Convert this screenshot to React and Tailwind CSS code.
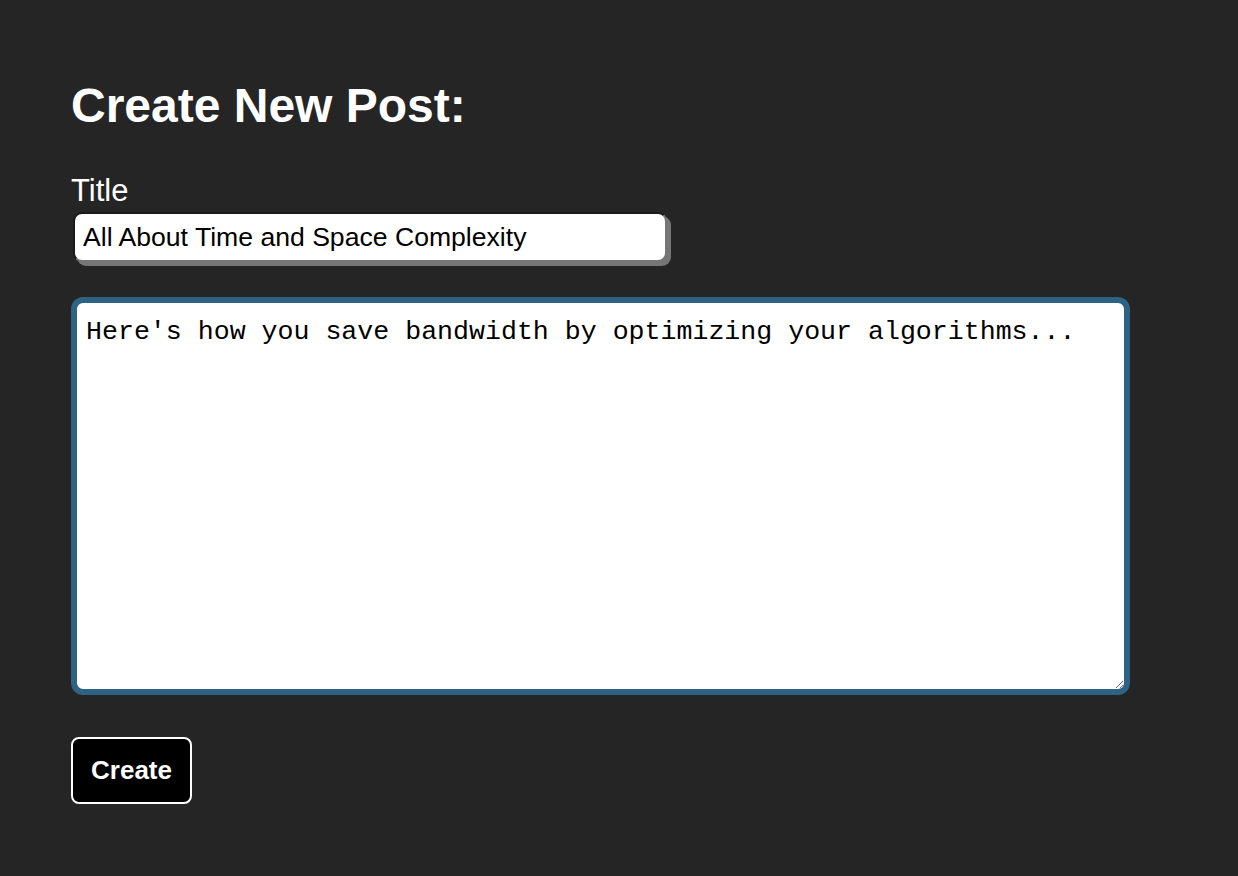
import { useState } from "react";

function App() {
  const [title, setTitle] = useState("All About Time and Space Complexity");
  const [body, setBody] = useState(
    "Here's how you save bandwidth by optimizing your algorithms..."
  );

  return (
    <div className="min-h-screen bg-[#252525] pl-[71px] pt-[78px] font-['Liberation_Sans',Arial,sans-serif] text-white">
      <h1 className="text-[48px] font-bold leading-[56px]">Create New Post:</h1>

      <form className="mt-[40px]" onSubmit={(e) => e.preventDefault()}>
        <label htmlFor="title" className="block text-[31px] leading-[34px]">
          Title
        </label>
        <input
          id="title"
          type="text"
          value={title}
          onChange={(e) => setTitle(e.target.value)}
          className="mt-[4px] ml-[2px] block h-[50px] w-[594px] rounded-[9px] border-2 border-[#1a1a1a] border-r-[#767676] border-b-[#767676] bg-white px-[8px] text-[26.6px] text-black shadow-[4px_4px_0_#767676] outline-none"
        />

        <textarea
          autoFocus
          value={body}
          onChange={(e) => setBody(e.target.value)}
          className="mt-[35px] block h-[398px] w-[1059px] rounded-[12px] border-[6px] border-[#2f6385] bg-white px-[9px] pt-[10px] font-['Liberation_Mono','Courier_New',monospace] text-[26.6px] text-black caret-black outline-none"
        />

        <button
          type="submit"
          className="mt-[42px] block h-[67px] w-[121px] rounded-[8px] border-2 border-white bg-black text-[26px] font-bold text-white"
        >
          Create
        </button>
      </form>
    </div>
  );
}

export default App;
